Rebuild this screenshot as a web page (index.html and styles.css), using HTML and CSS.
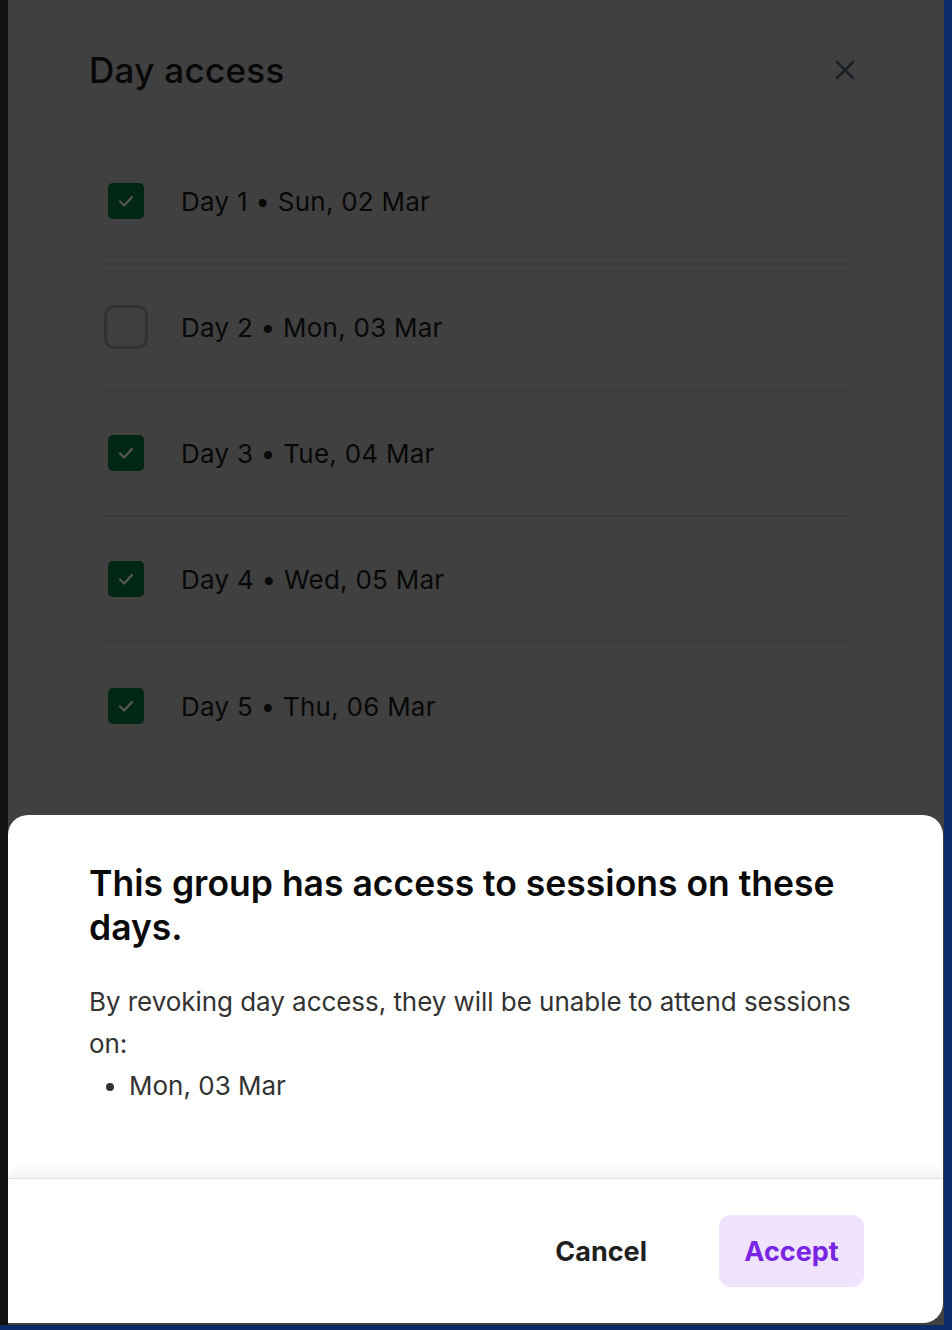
FILE: index.html
```html
<!DOCTYPE html>
<html lang="en">
<head>
<meta charset="utf-8">
<title>Day access</title>
<link rel="stylesheet" href="styles.css">
</head>
<body>
<div class="screen">
  <div class="edge-left"></div>
  <main class="stage">
    <section class="modal">
      <header class="modal-head">
        <h1 class="modal-title">Day access</h1>
        <button class="close" aria-label="Close">
          <svg width="20" height="20" viewBox="0 0 20 20"><path d="M2 2 L18 18 M18 2 L2 18" stroke="currentColor" stroke-width="2.6" stroke-linecap="round" fill="none"/></svg>
        </button>
      </header>
      <ul class="days">
        <li class="day"><span class="box checked"><svg width="20" height="20" viewBox="0 0 20 20"><path d="M4 10.5 L8.2 14.5 L16 6" stroke="currentColor" stroke-width="2.2" stroke-linecap="round" stroke-linejoin="round" fill="none"/></svg></span><span class="day-label">Day 1 • Sun, 02 Mar</span></li>
        <li class="day"><span class="box"></span><span class="day-label">Day 2 • Mon, 03 Mar</span></li>
        <li class="day"><span class="box checked"><svg width="20" height="20" viewBox="0 0 20 20"><path d="M4 10.5 L8.2 14.5 L16 6" stroke="currentColor" stroke-width="2.2" stroke-linecap="round" stroke-linejoin="round" fill="none"/></svg></span><span class="day-label">Day 3 • Tue, 04 Mar</span></li>
        <li class="day"><span class="box checked"><svg width="20" height="20" viewBox="0 0 20 20"><path d="M4 10.5 L8.2 14.5 L16 6" stroke="currentColor" stroke-width="2.2" stroke-linecap="round" stroke-linejoin="round" fill="none"/></svg></span><span class="day-label">Day 4 • Wed, 05 Mar</span></li>
        <li class="day last"><span class="box checked"><svg width="20" height="20" viewBox="0 0 20 20"><path d="M4 10.5 L8.2 14.5 L16 6" stroke="currentColor" stroke-width="2.2" stroke-linecap="round" stroke-linejoin="round" fill="none"/></svg></span><span class="day-label">Day 5 • Thu, 06 Mar</span></li>
      </ul>
    </section>
    <section class="sheet">
      <div class="sheet-body">
        <h2 class="sheet-title">This group has access to sessions on these days.</h2>
        <p class="sheet-text">By revoking day access, they will be unable to attend sessions on:</p>
        <ul class="revoked">
          <li>Mon, 03 Mar</li>
        </ul>
      </div>
      <footer class="sheet-foot">
        <button class="btn btn-cancel">Cancel</button>
        <button class="btn btn-accept">Accept</button>
      </footer>
    </section>
  </main>
  <div class="edge-right"></div>
</div>
</body>
</html>
```

FILE: styles.css
```css
* { box-sizing: border-box; }
html, body { margin: 0; padding: 0; }
body {
  width: 952px;
  height: 1330px;
  overflow: hidden;
  background: #0a2a6a;
  font-family: Inter, "Noto Sans", "Liberation Sans", sans-serif;
}
.screen {
  display: flex;
  height: 1325px;
}
.edge-left {
  width: 8px;
  background: #111111;
}
.edge-right {
  width: 8px;
  background: #0a2a6a;
}
.stage {
  position: relative;
  width: 936px;
  height: 1325px;
  background: #404040;
  overflow: hidden;
}
.modal {
  padding: 0 95px 0 96px;
}
.modal-head {
  display: flex;
  align-items: center;
  justify-content: space-between;
  padding: 50px 0 0 0;
  margin-left: -15px;
}
.modal-title {
  margin: 0;
  font-size: 35px;
  line-height: 40px;
  font-weight: 500;
  color: #080808;
  letter-spacing: 0.3px;
}
.close {
  border: 0;
  background: none;
  padding: 0;
  width: 20px;
  height: 20px;
  color: #1b2026;
  margin-right: -6px;
  display: flex;
}
.days {
  list-style: none;
  margin: 49px 0 0 0;
  padding: 0;
}
.day {
  display: flex;
  align-items: center;
  gap: 33px;
  height: 126px;
  border-bottom: 2px solid #393b3e;
}
.day.last { border-bottom: 0; }
.box {
  width: 44px;
  height: 44px;
  border-radius: 10px;
  border: 3px solid #2f3337;
  display: flex;
  align-items: center;
  justify-content: center;
  flex: none;
}
.box.checked {
  border: 4px solid transparent;
  background: #002714;
  background-clip: padding-box;
  color: #555855;
  border-radius: 9px;
}
.day-label {
  font-size: 26px;
  color: #080808;
  letter-spacing: 0.25px;
}
.sheet {
  position: absolute;
  left: 0;
  right: 1px;
  top: 815px;
  bottom: 2px;
  background: #ffffff;
  border-radius: 20px 20px 20px 0;
  display: flex;
  flex-direction: column;
}
.sheet-body {
  flex: 1;
  padding: 47px 80px 0 81px;
}
.sheet-title {
  margin: 0;
  font-size: 35.5px;
  line-height: 44px;
  font-weight: 600;
  color: #0a0a0a;
  letter-spacing: 0;
}
.sheet-text {
  margin: 31px 0 0 0;
  font-size: 26px;
  line-height: 42px;
  color: #333333;
  letter-spacing: -0.05px;
}
.revoked {
  margin: 0;
  padding-left: 40px;
  font-size: 26px;
  line-height: 41px;
  color: #333333;
}
.sheet-foot {
  height: 145px;
  border-top: 1px solid #dce1e7;
  box-shadow: 0 -6px 10px rgba(30, 50, 90, 0.07);
  display: flex;
  align-items: center;
  justify-content: flex-end;
  gap: 48px;
  padding: 0 79px 0 0;
}
.btn {
  font-family: inherit;
  border: 0;
  font-size: 27px;
  font-weight: 700;
  height: 72px;
  border-radius: 12px;
  cursor: pointer;
}
.btn-cancel {
  background: none;
  color: #1f1f1f;
  padding: 0 24px;
}
.btn-accept {
  background: #efe3fd;
  color: #7a24e4;
  width: 145px;
  padding: 0;
}
```
